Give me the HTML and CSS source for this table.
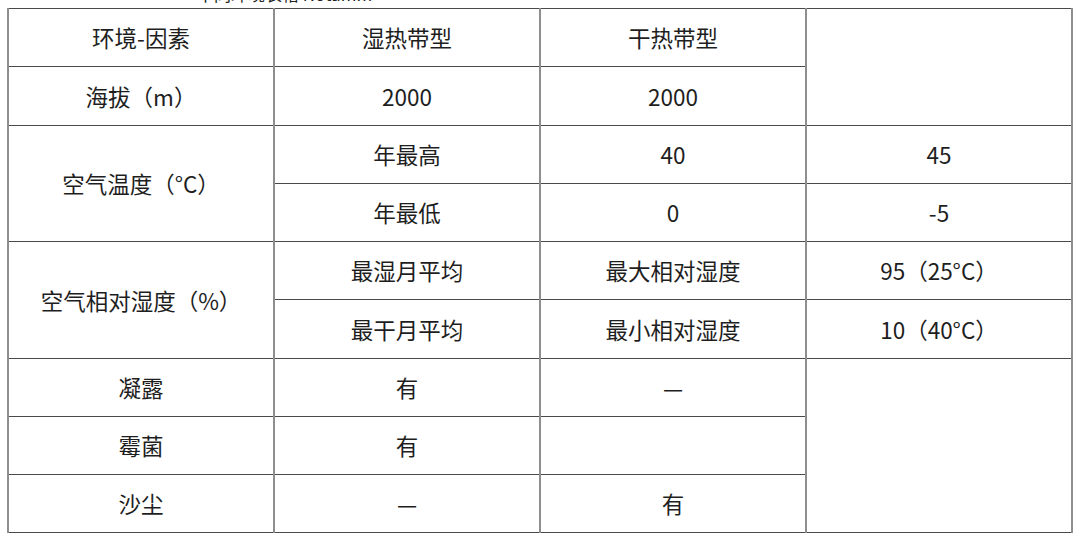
FILE: index.html
```html
<!DOCTYPE html>
<html lang="zh">
<head>
<meta charset="utf-8">
<link rel="stylesheet" href="styles.css">
</head>
<body>
<div class="caption"><span class="caption-text">不同环境表格 Notamm</span></div>
<table class="env">
  <colgroup><col><col><col><col></colgroup>
  <tr><td>环境-因素</td><td>湿热带型</td><td>干热带型</td><td rowspan="2"></td></tr>
  <tr><td>海拔（m）</td><td>2000</td><td>2000</td></tr>
  <tr><td rowspan="2">空气温度（°C）</td><td>年最高</td><td>40</td><td>45</td></tr>
  <tr><td>年最低</td><td>0</td><td>-5</td></tr>
  <tr><td rowspan="2">空气相对湿度（%）</td><td>最湿月平均</td><td>最大相对湿度</td><td>95（25°C）</td></tr>
  <tr><td>最干月平均</td><td>最小相对湿度</td><td>10（40°C）</td></tr>
  <tr><td>凝露</td><td>有</td><td>—</td><td rowspan="3"></td></tr>
  <tr><td>霉菌</td><td>有</td><td></td></tr>
  <tr><td>沙尘</td><td>—</td><td>有</td></tr>
</table>
</body>
</html>
```
FILE: styles.css
```css
html, body {
  margin: 0;
  padding: 0;
  background: #ffffff;
}
body {
  padding-left: 7px;
  font-family: "Noto Sans CJK SC", "Noto Sans", sans-serif;
  color: #1e1e1e;
}
.caption {
  height: 8px;
  overflow: hidden;
  padding-left: 190px;
  color: #222;
}
.caption-text {
  display: block;
  font-size: 17px;
  line-height: 20px;
  margin-top: -16px;
}
.env {
  border-collapse: collapse;
  table-layout: fixed;
  width: 1066px;
  font-size: 22.5px;
}
.env col {
  width: 266px;
}
.env td {
  height: 57.25px;
  padding: 0;
  text-align: center;
  vertical-align: middle;
  line-height: 1;
  border-top: 1px solid #4a4a4a;
  border-bottom: 1px solid #4a4a4a;
  border-left: 2px solid #8e8e8e;
  border-right: 2px solid #8e8e8e;
}
```
